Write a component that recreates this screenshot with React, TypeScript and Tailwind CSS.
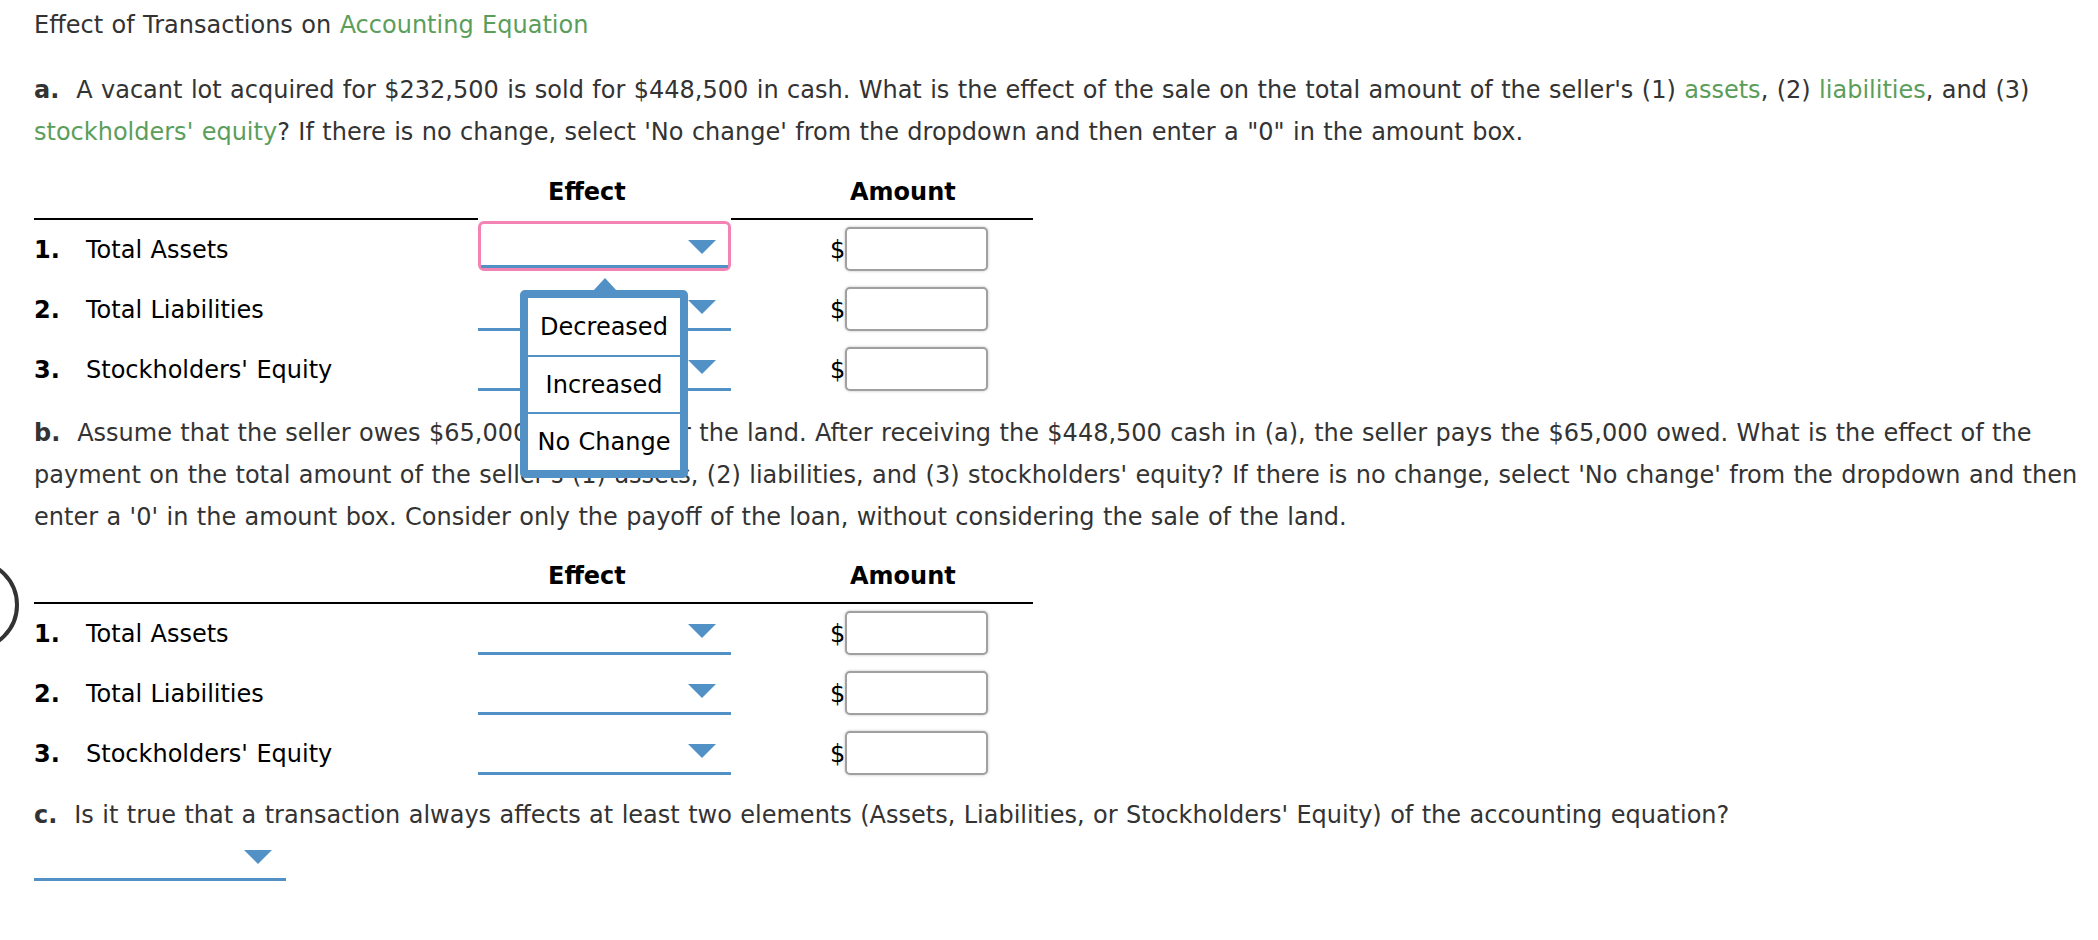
import React from "react";

const Tri = () => (
  <svg width="28" height="14" viewBox="0 0 28 14" className="block">
    <polygon points="0,0 28,0 14,14" fill="#5191c5" />
  </svg>
);

const Green = ({ children }: { children: React.ReactNode }) => (
  <span className="text-[#5b9e5b]">{children}</span>
);

const PlainSelect = ({ w = "w-[253px]", pr = "pr-[15px]" }: { w?: string; pr?: string }) => (
  <div className={`${w} h-[50px] border-b-[3px] border-[#5191c5] flex items-center justify-end pt-[5px] ${pr}`}>
    <Tri />
  </div>
);

const FocusedSelect = () => (
  <div className="w-[253px] h-[50px] border-[3px] border-[#f283b3] rounded-[6px] flex flex-col">
    <div className="flex-1 flex items-center justify-end pr-[12px] pt-[4px]">
      <Tri />
    </div>
    <div className="h-[3px] bg-[#5191c5]" />
  </div>
);

const Header = ({ focused }: { focused: boolean }) => (
  <div className="flex font-bold text-black">
    <div className="w-[444px] h-[49px] border-b-2 border-black" />
    <div className={`w-[253px] h-[49px] border-b-2 ${focused ? "border-white" : "border-black"} pl-[70px]`}>Effect</div>
    <div className="w-[302px] h-[49px] border-b-2 border-black pl-[119px]">Amount</div>
  </div>
);

const Row = ({ n, label, select }: { n: string; label: string; select: React.ReactNode }) => (
  <div className="flex h-[50px] text-black">
    <div className="w-[444px] pt-[8px]">
      <span className="inline-block w-[52px] font-bold">{n}</span>
      {label}
    </div>
    <div>{select}</div>
    <div className="ml-[99px] pt-[8px]">$</div>
    <div className="self-end w-[143px] h-[44px] border-2 border-[#a0a0a0] rounded-[5px] bg-white shadow-[0_0_3px_rgba(0,0,0,0.25)]" />
  </div>
);

export default function App() {
  return (
    <div
      className="relative min-h-[940px] bg-white pl-[34px] pt-[4px] text-[24px] leading-[42px] text-[#333] whitespace-nowrap [word-spacing:0.8px]"
      style={{ fontFamily: '"DejaVu Sans", Verdana, sans-serif' }}
    >
      <svg width="22" height="100" viewBox="0 0 22 100" className="absolute left-0 top-[555px]">
        <circle cx="-27" cy="50" r="44" fill="none" stroke="#333" strokeWidth="4" />
      </svg>

      <div>
        Effect of Transactions on <Green>Accounting Equation</Green>
      </div>

      <div className="mt-[23px]">
        <span className="font-bold">a.</span>&nbsp; A vacant lot acquired for $232,500 is sold for $448,500 in cash. What is the effect of the sale on the total amount of the seller's (1) <Green>assets</Green>, (2) <Green>liabilities</Green>, and (3)
        <br />
        <Green>stockholders' equity</Green>? If there is no change, select 'No change' from the dropdown and then enter a "0" in the amount box.
      </div>

      <div className="mt-[18px]">
        <Header focused={true} />
      </div>
      <div className="relative pt-[1px] flex flex-col gap-[10px]">
        <Row n="1." label="Total Assets" select={<FocusedSelect />} />
        <Row n="2." label="Total Liabilities" select={<PlainSelect />} />
        <Row n="3." label="Stockholders' Equity" select={<PlainSelect />} />

        <svg width="24" height="13" viewBox="0 0 24 13" className="absolute left-[559px] top-[58px] z-10">
          <polygon points="12,0 24,13 0,13" fill="#5191c5" />
        </svg>
        <div className="absolute left-[486px] top-[70px] z-10 w-[168px] h-[188px] border-[8px] border-[#5191c5] rounded-[5px] bg-white text-black flex flex-col">
          <div className="h-[57px] flex items-center justify-center">Decreased</div>
          <div className="h-[57px] border-t-2 border-[#5191c5] flex items-center justify-center">Increased</div>
          <div className="h-[58px] border-t-2 border-[#5191c5] flex items-center justify-center">No Change</div>
        </div>
      </div>

      <div className="mt-[21px]">
        <span className="font-bold">b.</span>&nbsp; Assume that the seller owes $65,000 on a loan for the land. After receiving the $448,500 cash in (a), the seller pays the $65,000 owed. What is the effect of the
        <br />
        payment on the total amount of the seller's (1) assets, (2) liabilities, and (3) stockholders' equity? If there is no change, select 'No change' from the dropdown and then
        <br />
        enter a '0' in the amount box. Consider only the payoff of the loan, without considering the sale of the land.
      </div>

      <div className="mt-[17px]">
        <Header focused={false} />
      </div>
      <div className="pt-[1px] flex flex-col gap-[10px]">
        <Row n="1." label="Total Assets" select={<PlainSelect />} />
        <Row n="2." label="Total Liabilities" select={<PlainSelect />} />
        <Row n="3." label="Stockholders' Equity" select={<PlainSelect />} />
      </div>

      <div className="mt-[19px]">
        <span className="font-bold">c.</span>&nbsp; Is it true that a transaction always affects at least two elements (Assets, Liabilities, or Stockholders' Equity) of the accounting equation?
      </div>
      <div className="mt-[-5px]">
        <PlainSelect w="w-[252px]" pr="pr-[14px]" />
      </div>
    </div>
  );
}
